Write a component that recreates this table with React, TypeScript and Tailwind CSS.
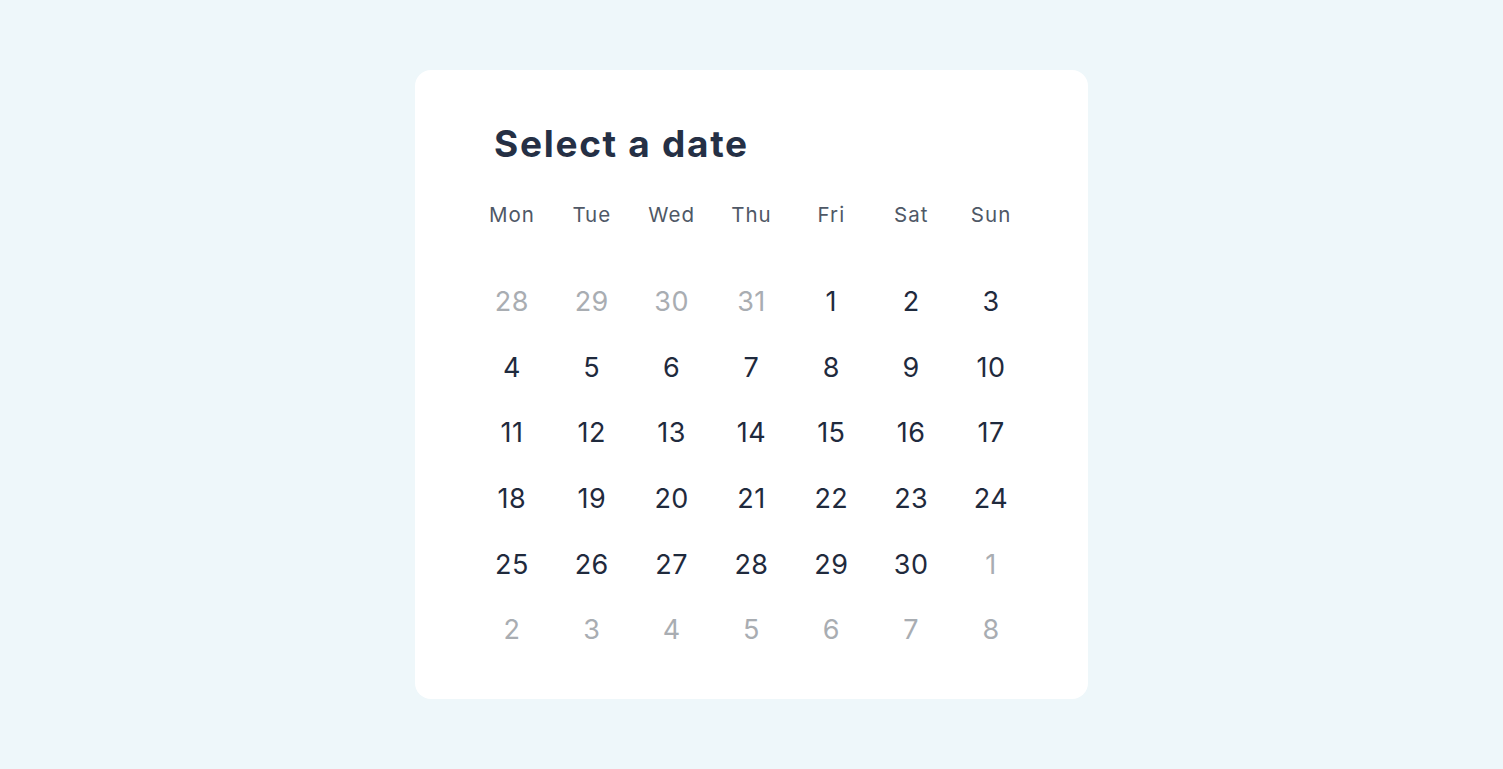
const days = ['Mon', 'Tue', 'Wed', 'Thu', 'Fri', 'Sat', 'Sun'];

interface Cell {
    day: number;
    muted: boolean;
}

function buildCells(): Cell[] {
    const cells: Cell[] = [];
    [28, 29, 30, 31].forEach((d) => cells.push({ day: d, muted: true }));
    for (let d = 1; d <= 30; d++) cells.push({ day: d, muted: false });
    for (let d = 1; d <= 8; d++) cells.push({ day: d, muted: true });
    return cells;
}

export default function App() {
    const cells = buildCells();

    return (
        <div
            className="h-[769px] w-full flex items-center justify-center bg-[#eef7fa]"
            style={{ fontFamily: 'Inter, "Noto Sans", sans-serif' }}
        >
            <div className="w-[673px] bg-white rounded-[16px] px-[57px] pt-[52px] pb-[36px]">
                {/* Title */}
                <h1 className="ml-[22px] text-[37px] leading-[44px] font-bold tracking-[1.7px] text-[#253045]">
                    Select a date
                </h1>

                {/* Weekday header */}
                <div className="grid grid-cols-7 mt-[35px]">
                    {days.map((d) => (
                        <div key={d} className="text-center text-[20.5px] leading-[28px] text-[#4f5866] tracking-[1px]">
                            {d}
                        </div>
                    ))}
                </div>

                {/* Days */}
                <div className="grid grid-cols-7 mt-[41px] auto-rows-[65.6px]">
                    {cells.map((c, i) => (
                        <div
                            key={i}
                            className={`flex items-center justify-center text-[27px] tracking-[0.5px] ${c.muted ? 'text-[#a9adb2]' : 'text-[#1f2a3d]'}`}
                        >
                            {c.day}
                        </div>
                    ))}
                </div>
            </div>
        </div>
    );
}
